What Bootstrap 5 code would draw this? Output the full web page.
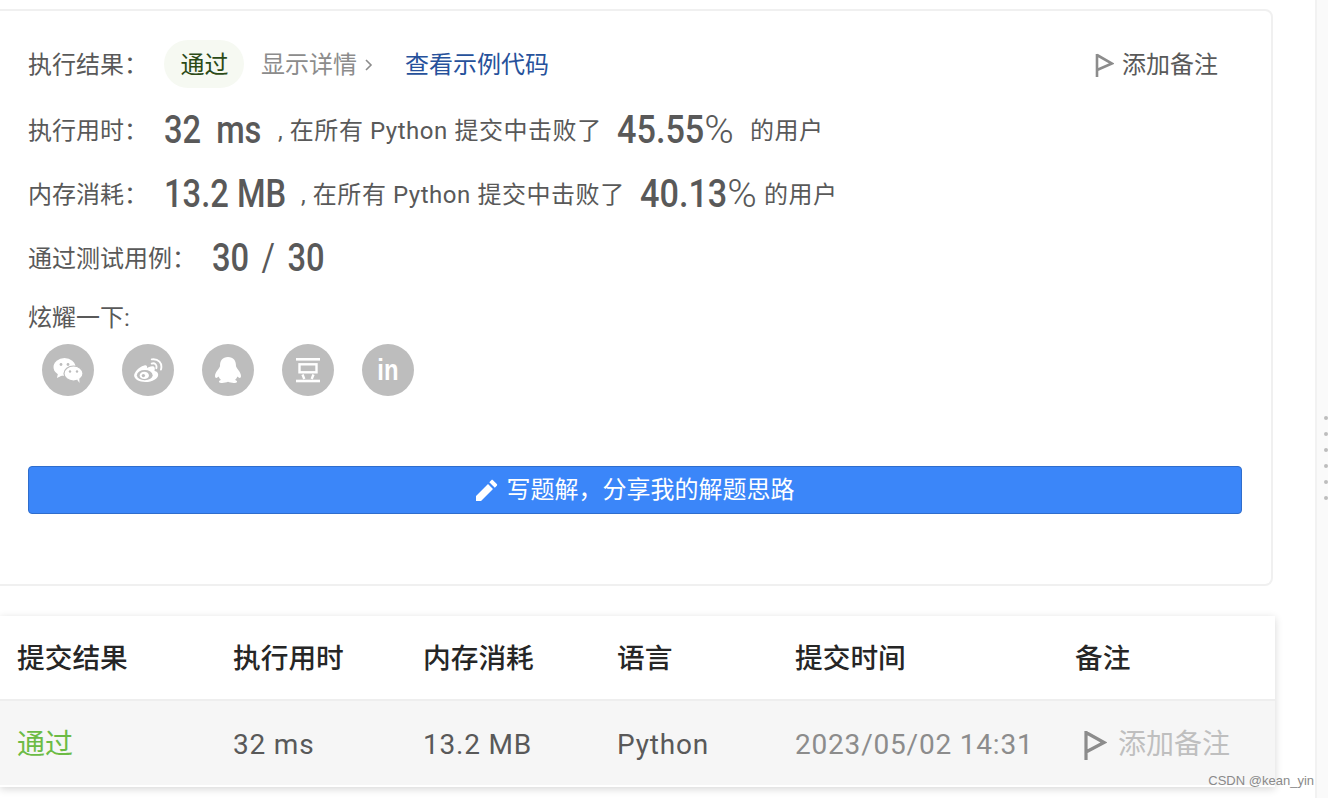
<!DOCTYPE html>
<html lang="zh-CN">
<head>
<meta charset="utf-8">
<title>提交结果</title>
<link href="https://cdn.jsdelivr.net/npm/bootstrap@5.3.0/dist/css/bootstrap.min.css" rel="stylesheet">
<style>
html,body{height:100%;overflow:hidden}
body{background:#fff;font-family:"Roboto","Noto Sans CJK SC",sans-serif;color:#595959;font-size:24px;line-height:34px}
.shell{height:798px}
.main-col{width:1315px;flex:none;padding-top:9px}
.side-col{flex:1;background:#fafafa;border-left:2px solid #f2f2f2;padding-top:416px;padding-left:7px}
.side-dot{width:4px;height:4px;border-radius:50%;background:#bdbdbd;margin-bottom:12px}
.result-box{width:1273px;height:577px;background:#fff;border:2px solid #f0f0f0;border-left:0;border-radius:0 8px 8px 0;padding:29px 0 0 28px;position:relative}
.info-row{height:64px;white-space:nowrap}
.top-row{height:48px;margin-bottom:10px}
.lab{display:inline-block;width:136px;flex:none;padding-top:2px}
.lab-wide{width:184px}
.pill{background:#f6f9f2;color:#2b4a16;border-radius:24px;height:48px;width:80px;text-align:center;line-height:50px;padding-left:1px}
.detail-link{color:#8c8c8c;margin-left:17px;width:144px;padding-top:2px}
.chev{margin-left:7px}
.code-link{color:#26519b;text-decoration:none;padding-top:2px}
.note-link{margin-left:auto;margin-right:53px;color:#595959;padding-top:2px}
.num{font-size:38px;font-weight:500;color:#595959}
.num-tight{display:inline-block;transform:scaleX(.86);transform-origin:left center}
.num-a{width:114px;word-spacing:8px}
.num-b{width:137px}
.num-c{word-spacing:5px}
.num-light{font-weight:400}
.sub{letter-spacing:.55px;width:339px;padding-top:2px}
.tail{letter-spacing:.55px;padding-top:2px}
.pct{font-size:38px;font-weight:500}
.pct-in{display:inline-block;transform:scaleX(.9);transform-origin:left center}
.pct-a{width:133px}
.pct-b{width:124px}
.pct-sign{font-weight:300;display:inline-block;transform:scaleX(1.17);transform-origin:left center}
.share-row{margin-top:11px;line-height:34px}
.social{display:flex;gap:28px;margin:9px 0 0 14px}
.soc{width:52px;height:52px;border-radius:50%;background:#bdbdbd;display:flex;align-items:center;justify-content:center}
.soc-in{font-family:"Liberation Sans",sans-serif;font-weight:700;font-size:29px;line-height:1;color:#fff;transform:scaleX(.82)}
.write-btn{display:flex;align-items:center;justify-content:center;gap:9px;width:1214px;height:48px;margin-top:70px;background:#3b86f9;border:1px solid #2f6dcc;border-radius:4px;color:#fff;font-size:24px;padding:0;box-shadow:none}
.write-btn:hover{background:#3b86f9;color:#fff;border-color:#2f6dcc}
.history{width:1275px;margin-top:30px;background:#fff;box-shadow:0 2px 8px rgba(0,0,0,.16);height:171px}
.history table{width:1275px;table-layout:fixed;margin:0;border-collapse:collapse}
.cw1{width:233px}.cw2{width:190px}.cw3{width:194px}.cw4{width:178px}.cw5{width:280px}
.history th{height:84px;font-size:27.7px;font-weight:500;color:#262626;padding:3px 0 0 17px;vertical-align:middle;border-bottom:2px solid #eeeeee;background:#fff;box-shadow:none}
.history td{height:85px;font-size:28px;color:#595959;padding:4px 0 0 17px;vertical-align:middle;background:#f6f6f6;border:0;box-shadow:none;white-space:nowrap;letter-spacing:.8px}
.history .c2,.history .c3,.history .c4,.history .c5,.history .c6{padding-left:0}
.history td.state-ok{color:#6cbb45;letter-spacing:0}
.history td.date-cell{color:#8c8c8c}
.add-note{color:#bfbfbf;letter-spacing:0;display:flex;align-items:center;gap:11px;margin-left:8px}
.mark-text{position:absolute;right:14px;bottom:8px;font-family:"Liberation Sans",sans-serif;font-size:13px;line-height:18px;color:#8a8a8a}
</style>
</head>
<body>
<div class="shell d-flex position-relative">
  <div class="main-col">
    <div class="result-box">
      <div class="info-row top-row d-flex align-items-center">
        <span class="lab">执行结果：</span>
        <span class="pill">通过</span>
        <span class="detail-link d-flex align-items-center">显示详情<svg class="chev" width="9" height="14" viewBox="0 0 9 14"><path d="M2 2l5 5-5 5" fill="none" stroke="#8c8c8c" stroke-width="1.6"/></svg></span>
        <a class="code-link" href="#">查看示例代码</a>
        <span class="note-link d-flex align-items-center gap-2"><svg width="20" height="26" viewBox="0 0 20 26"><path d="M3 2v23M3 3l15 8.500L3 18" fill="none" stroke="#8c8c8c" stroke-width="2.600"/></svg>添加备注</span>
      </div>
      <div class="info-row d-flex align-items-center">
        <span class="lab">执行用时：</span>
        <span class="num num-a"><span class="num-tight">32 ms</span></span>
        <span class="sub">, 在所有 Python 提交中击败了</span>
        <span class="pct pct-a"><span class="pct-in">45.55<span class="pct-sign">%</span></span></span>
        <span class="tail">的用户</span>
      </div>
      <div class="info-row d-flex align-items-center">
        <span class="lab">内存消耗：</span>
        <span class="num num-b"><span class="num-tight">13.2 MB</span></span>
        <span class="sub">, 在所有 Python 提交中击败了</span>
        <span class="pct pct-b"><span class="pct-in">40.13<span class="pct-sign">%</span></span></span>
        <span class="tail">的用户</span>
      </div>
      <div class="info-row d-flex align-items-center">
        <span class="lab lab-wide">通过测试用例：</span>
        <span class="num num-c"><span class="num-tight">30 <span class="num-light">/</span> 30</span></span>
      </div>
      <div class="share-row">炫耀一下:</div>
      <div class="social">
        <span class="soc"><svg width="30" height="25" viewBox="0 0 30 25"><ellipse cx="11.500" cy="9" rx="11" ry="9" fill="#fff"/><path d="M5 15l-1 5 6-3z" fill="#fff"/><ellipse cx="20.500" cy="15.500" rx="9.500" ry="7.500" fill="#fff" stroke="#bdbdbd" stroke-width="1.200"/><path d="M24 21.500l2.500 3.500-.3-5z" fill="#fff"/><circle cx="8" cy="6.500" r="1.400" fill="#bdbdbd"/><circle cx="15" cy="6.500" r="1.400" fill="#bdbdbd"/><circle cx="17" cy="13.500" r="1.200" fill="#bdbdbd"/><circle cx="24" cy="13.500" r="1.200" fill="#bdbdbd"/></svg></span>
        <span class="soc"><svg width="30" height="25" viewBox="0 0 32 27"><path d="M12 8C5 10 1 16 1 19c0 4 6 7 12 7 8 0 14-4 14-8 0-3-3-4-4-4 1-3 0-5-2-5-2-.3-5 1-6 2 .5-2-.5-4-3-3z" fill="#fff"/><ellipse cx="12.500" cy="18.500" rx="8.500" ry="5.500" fill="#bdbdbd"/><ellipse cx="12" cy="18.800" rx="5" ry="4" fill="#fff"/><circle cx="11" cy="19" r="1.800" fill="#bdbdbd"/><path d="M20 6c3-1 6 1 5 5M20 1.500c7-1 12 4 10 11" fill="none" stroke="#fff" stroke-width="2" stroke-linecap="round"/></svg></span>
        <span class="soc"><svg width="28" height="26" viewBox="0 0 28 26"><path d="M14 0C8.500 0 6 3.500 6 9c0 2-5 6-5 10 0 2.500 2 2.500 3.500.5.7 1.500 1.500 2.500 2.500 3.500-2 .7-3 2-1 2.700 2.500.500 6 0 8-1 2 1 5.500 1.500 8 1 2-.7 1-2-1-2.700 1-1 1.800-2 2.500-3.500 1.500 2 3.500 2 3.500-.5 0-4-5-8-5-10 0-5.500-2.500-9-8-9z" fill="#fff"/></svg></span>
        <span class="soc"><svg width="26" height="26" viewBox="0 0 26 26"><g fill="#fff"><rect x="1" y="1" width="24" height="2.600"/><rect x="1" y="22.700" width="24" height="2.600"/></g><rect x="4.500" y="7.300" width="17" height="8" fill="none" stroke="#fff" stroke-width="2.400"/><path d="M7.500 17.500l1.800 4.500M18.500 17.500l-1.800 4.500" stroke="#fff" stroke-width="2.400"/></svg></span>
        <span class="soc"><span class="soc-in">in</span></span>
      </div>
      <button type="button" class="btn write-btn"><svg width="22" height="22" viewBox="0 0 22 22"><path d="M0 17v5h5L17 10l-5-5zM20.800 6.700c.5-.5.500-1.200 0-1.700l-3.800-3.800c-.5-.5-1.200-.5-1.700 0l-2 2 5.500 5.500z" fill="#fff"/></svg>写题解，分享我的解题思路</button>
    </div>
    <div class="history">
      <table class="table">
        <colgroup><col class="cw1"><col class="cw2"><col class="cw3"><col class="cw4"><col class="cw5"><col></colgroup>
        <thead><tr><th>提交结果</th><th class="c2">执行用时</th><th class="c3">内存消耗</th><th class="c4">语言</th><th class="c5">提交时间</th><th class="c6">备注</th></tr></thead>
        <tbody><tr>
          <td class="state-ok">通过</td>
          <td class="c2">32 ms</td>
          <td class="c3">13.2 MB</td>
          <td class="c4">Python</td>
          <td class="c5 date-cell">2023/05/02 14:31</td>
          <td class="c6"><span class="add-note"><svg width="24" height="30" viewBox="0 0 24 30"><path d="M3 1v29M3 2.500l18 10L3 22" fill="none" stroke="#8c8c8c" stroke-width="3.200"/></svg>添加备注</span></td>
        </tr></tbody>
      </table>
    </div>
  </div>
  <div class="side-col">
    <div class="side-dot"></div><div class="side-dot"></div><div class="side-dot"></div><div class="side-dot"></div><div class="side-dot"></div><div class="side-dot"></div>
  </div>
  <div class="mark-text">CSDN @kean_yin</div>
</div>
<script src="https://cdn.jsdelivr.net/npm/bootstrap@5.3.0/dist/js/bootstrap.bundle.min.js"></script>
</body>
</html>
